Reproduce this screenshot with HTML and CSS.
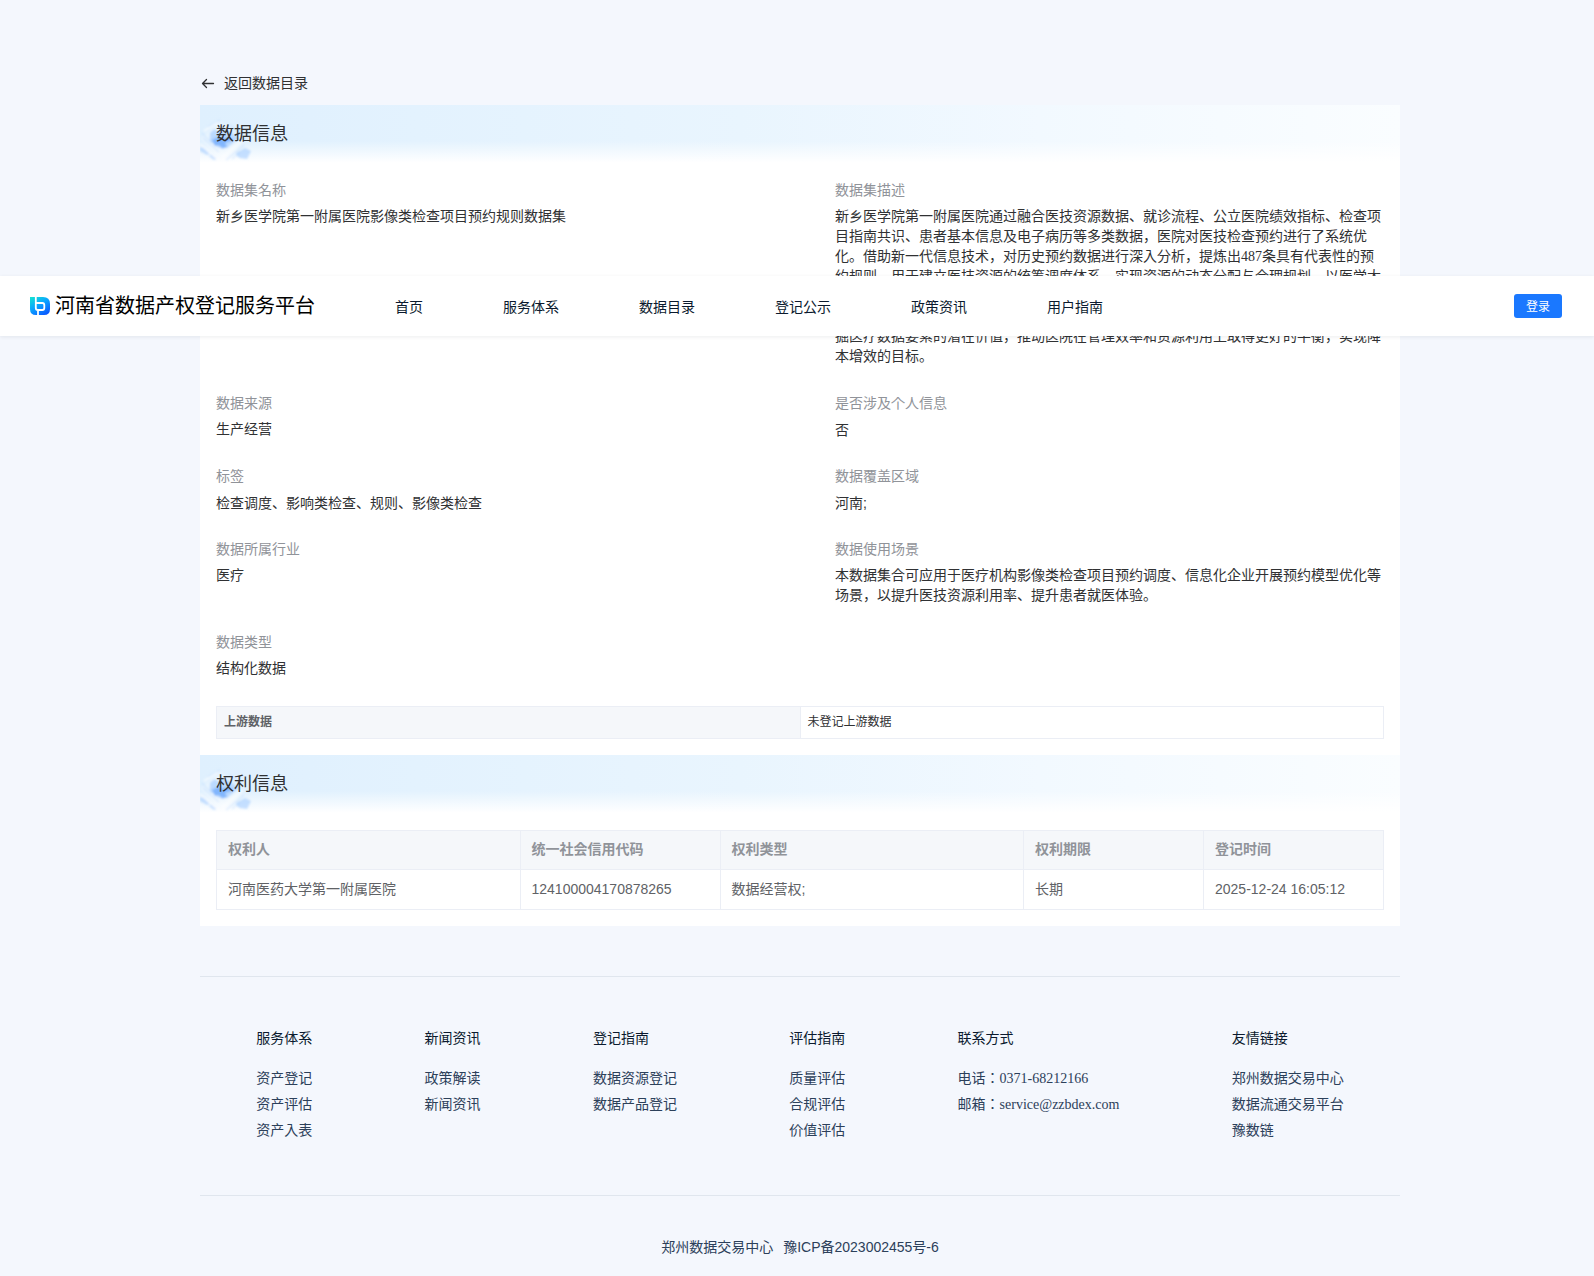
FILE: index.html
```html
<!DOCTYPE html>
<html>
<head>
  <meta charset="UTF-8">
  <meta name="viewport" content="width=device-width, initial-scale=1.0">
  <title>河南省数据产权登记服务平台</title>
  <link rel="stylesheet" href="styles.css">
</head>
<body>
  <header class="header">
    <a class="logo" href="#">
      <svg width="20" height="20" viewBox="0 0 20 20">
        <defs>
          <linearGradient id="logoFill" x1="0" y1="0" x2="0.7" y2="1">
            <stop offset="0" stop-color="#14e6d0"/>
            <stop offset="0.5" stop-color="#0aa5ff"/>
            <stop offset="1" stop-color="#0a5cff"/>
          </linearGradient>
        </defs>
        <path fill="url(#logoFill)" d="M0 1h13q7 0 7 7v5q0 6-6 6H6q-6 0-6-6z"/>
        <path fill="none" stroke="#fff" stroke-width="1.8" d="M5.800 0v12q0 2 2 2h4.500q2 0 2-2V9q0-2-2-2H5.800M8 14v6"/>
      </svg>
      <span>河南省数据产权登记服务平台</span>
    </a>
    <nav class="nav">
      <a href="#">首页</a>
      <a href="#">服务体系</a>
      <a href="#">数据目录</a>
      <a href="#">登记公示</a>
      <a href="#">政策资讯</a>
      <a href="#">用户指南</a>
    </nav>
    <button class="login" type="button">登录</button>
  </header>

  <div class="container">
    <a class="back" href="#">
      <svg width="16" height="16" viewBox="0 0 16 16" fill="none" stroke="#303133" stroke-width="1.3" stroke-linecap="round" stroke-linejoin="round">
        <path d="M13.500 7.500H2.500M6.500 3.500l-4 4 4 4"/>
      </svg>
      <span>返回数据目录</span>
    </a>

    <main class="card">
      <div class="banner">
        <svg class="banner-art" width="56" height="58" viewBox="0 0 56 58">
          <defs>
            <filter id="soft" x="-20%" y="-20%" width="140%" height="140%"><feGaussianBlur stdDeviation="0.8"/></filter>
          </defs>
          <g id="tiles" filter="url(#soft)">
            <path fill="#fff" opacity=".25" d="M0 34 20 16l24 20-20 20z"/>
            <path fill="#9cc8ff" opacity=".6" d="M10 28l5-4 3 3 5-4 8 4 8 6-12 10-5-2-3 2-9-7z"/>
            <path fill="#5c9dfb" opacity=".6" d="M12 35l6-3 4 2 6-2 5 3-8 3 2 4-5 2-3-4-4 1z"/>
            <path fill="#9cc8ff" opacity=".55" d="M0 42l4 1 6 6-3 1L0 46zM11 49l6 5-3 1-5-4zM36 48l9-5 6 3-4 8-7-1-3-2z"/>
            <path fill="none" stroke="#a9cffc" opacity=".6" d="M3 33l16 14M26 55l18-15M8 22l12-7M30 20l10 8M2 28l10 10M32 54l8-7"/>
            <path fill="none" stroke="#fff" opacity=".7" stroke-width="1.500" d="M0 39l18 16M22 52l20-16M4 26l14-9"/>
          </g>
        </svg>
        <h2>数据信息</h2>
      </div>

      <dl class="info">
        <div class="info-item">
          <dt>数据集名称</dt>
          <dd>新乡医学院第一附属医院影像类检查项目预约规则数据集</dd>
        </div>
        <div class="info-item">
          <dt>数据集描述</dt>
          <dd>新乡医学院第一附属医院通过融合医技资源数据、就诊流程、公立医院绩效指标、检查项目指南共识、患者基本信息及电子病历等多类数据，医院对医技检查预约进行了系统优化。借助新一代信息技术，对历史预约数据进行深入分析，提炼出487条具有代表性的预约规则，用于建立医技资源的统筹调度体系，实现资源的动态分配与合理规划。以医学大数据为支撑，构建智能化、精细化的检查预约模式，缩短患者等候时间，优化就医体验与服务流程，提升检查设备使用效率，为医院的精细化运营管理提供科学可靠的依据，并挖掘医疗数据要素的潜在价值，推动医院在管理效率和资源利用上取得更好的平衡，实现降本增效的目标。</dd>
        </div>
        <div class="info-item">
          <dt>数据来源</dt>
          <dd>生产经营</dd>
        </div>
        <div class="info-item">
          <dt>是否涉及个人信息</dt>
          <dd class="plain">否</dd>
        </div>
        <div class="info-item">
          <dt>标签</dt>
          <dd class="plain">检查调度、影响类检查、规则、影像类检查</dd>
        </div>
        <div class="info-item">
          <dt>数据覆盖区域</dt>
          <dd class="plain">河南;</dd>
        </div>
        <div class="info-item">
          <dt>数据所属行业</dt>
          <dd>医疗</dd>
        </div>
        <div class="info-item">
          <dt>数据使用场景</dt>
          <dd>本数据集合可应用于医疗机构影像类检查项目预约调度、信息化企业开展预约模型优化等场景，以提升医技资源利用率、提升患者就医体验。</dd>
        </div>
        <div class="info-item">
          <dt>数据类型</dt>
          <dd>结构化数据</dd>
        </div>
      </dl>

      <table class="upstream">
        <tbody>
          <tr>
            <th scope="row">上游数据</th>
            <td>未登记上游数据</td>
          </tr>
        </tbody>
      </table>

      <div class="banner">
        <svg class="banner-art" width="56" height="58" viewBox="0 0 56 58"><use href="#tiles"/></svg>
        <h2>权利信息</h2>
      </div>

      <table class="rights">
        <colgroup>
          <col><col class="col-code"><col><col class="col-date"><col class="col-date">
        </colgroup>
        <thead>
          <tr>
            <th>权利人</th>
            <th>统一社会信用代码</th>
            <th>权利类型</th>
            <th>权利期限</th>
            <th>登记时间</th>
          </tr>
        </thead>
        <tbody>
          <tr>
            <td>河南医药大学第一附属医院</td>
            <td>124100004170878265</td>
            <td>数据经营权;</td>
            <td>长期</td>
            <td>2025-12-24 16:05:12</td>
          </tr>
        </tbody>
      </table>
    </main>

    <footer class="footer">
      <div class="footer-links">
        <div>
          <h3>服务体系</h3>
          <a href="#">资产登记</a>
          <a href="#">资产评估</a>
          <a href="#">资产入表</a>
        </div>
        <div>
          <h3>新闻资讯</h3>
          <a href="#">政策解读</a>
          <a href="#">新闻资讯</a>
        </div>
        <div>
          <h3>登记指南</h3>
          <a href="#">数据资源登记</a>
          <a href="#">数据产品登记</a>
        </div>
        <div>
          <h3>评估指南</h3>
          <a href="#">质量评估</a>
          <a href="#">合规评估</a>
          <a href="#">价值评估</a>
        </div>
        <div>
          <h3>联系方式</h3>
          <p>电话：0371-68212166</p>
          <p>邮箱：service@zzbdex.com</p>
        </div>
        <div>
          <h3>友情链接</h3>
          <a href="#">郑州数据交易中心</a>
          <a href="#">数据流通交易平台</a>
          <a href="#">豫数链</a>
        </div>
      </div>
      <div class="copyright">
        <span>郑州数据交易中心</span>
        <a href="#">豫ICP备2023002455号-6</a>
      </div>
    </footer>
  </div>
</body>
</html>
```
FILE: styles.css
```css
* {
  box-sizing: border-box;
}
body {
  margin: 0;
  padding-left: 6px;
  background: #f4f7fd;
  color: #303133;
  font-family: "Liberation Serif", "Noto Sans CJK JP", serif;
  font-size: 14px;
  line-height: 20px;
}
a {
  color: inherit;
  text-decoration: none;
}
h2, h3, p, dl, dd {
  margin: 0;
  font-weight: normal;
}

/* header */
.header {
  position: absolute;
  top: 276px;
  left: 0;
  right: 0;
  z-index: 10;
  display: flex;
  align-items: center;
  height: 60px;
  padding: 0 32px 0 30px;
  background: #fff;
  box-shadow: 0 1px 4px rgba(0, 21, 41, 0.08);
}
.logo {
  display: flex;
  align-items: center;
  gap: 5px;
  color: #000;
  font-size: 20px;
}
.nav {
  display: flex;
  gap: 80px;
  margin-left: 80px;
  padding-top: 4px;
  color: #0b1a2e;
}
.login {
  width: 48px;
  height: 24px;
  margin-left: auto;
  padding: 0 0 2px;
  border: none;
  border-radius: 3px;
  background: #1a78ff;
  color: #fff;
  font-family: "Liberation Sans", "Noto Sans CJK JP", sans-serif;
  font-size: 12px;
}

/* content */
.container {
  max-width: 1200px;
  margin: 0 auto;
  padding-top: 74px;
}
.back {
  display: flex;
  align-items: center;
  gap: 8px;
  width: max-content;
  margin-bottom: 11px;
}
.card {
  padding-bottom: 16px;
  background: #fff;
}
.banner {
  position: relative;
  height: 60px;
  padding: 15px 16px;
  background: linear-gradient(to bottom, rgba(255, 255, 255, 0) 60%, #fff 96%), linear-gradient(to right, #dff0fe, #e9f5fe 45%, #f2f9ff 70%, #fafdff);
}
.banner-art {
  position: absolute;
  left: 0;
  top: 0;
}
.banner h2 {
  position: relative;
  font-size: 18px;
  line-height: 28px;
}
.info {
  display: grid;
  grid-template-columns: 1fr 1fr;
  column-gap: 70px;
  row-gap: 27px;
  padding: 16px 16px 27px;
}
.info dt {
  margin-bottom: 6px;
  color: #909399;
}
.plain {
  font-family: "Liberation Sans", "Noto Sans CJK JP", sans-serif;
}

table {
  width: calc(100% - 32px);
  margin: 0 16px;
  border-collapse: collapse;
  table-layout: fixed;
  font-family: "Liberation Sans", "Noto Sans CJK JP", sans-serif;
}
th, td {
  border: 1px solid #ebeef5;
  text-align: left;
}
th {
  background: #f5f7fa;
  font-weight: bold;
}
.upstream {
  margin-bottom: 16px;
  font-size: 12px;
}
.upstream th, .upstream td {
  padding: 5px 7px 6px;
}
.upstream th {
  color: #606266;
}
.rights {
  margin-top: 15px;
  color: #606266;
}
.rights th, .rights td {
  padding: 9px 11px 10px;
}
.rights th {
  padding-top: 8px;
  color: #909399;
}
.col-code {
  width: 200px;
}
.col-date {
  width: 180px;
}

/* footer */
.footer {
  margin-top: 50px;
  border-top: 1px solid #e0e6ee;
  color: #2c405a;
}
.footer-links {
  display: flex;
  justify-content: space-around;
  padding: 52px 0 51px;
  border-bottom: 1px solid #e0e6ee;
}
.footer-links h3 {
  margin-bottom: 17px;
  color: #0b1a2e;
  font-size: 14px;
}
.footer-links a, .footer-links p {
  display: block;
  line-height: 26px;
}
.copyright {
  display: flex;
  justify-content: center;
  gap: 10px;
  padding: 41px 0 18px;
  font-family: "Liberation Sans", "Noto Sans CJK JP", sans-serif;
}
```
